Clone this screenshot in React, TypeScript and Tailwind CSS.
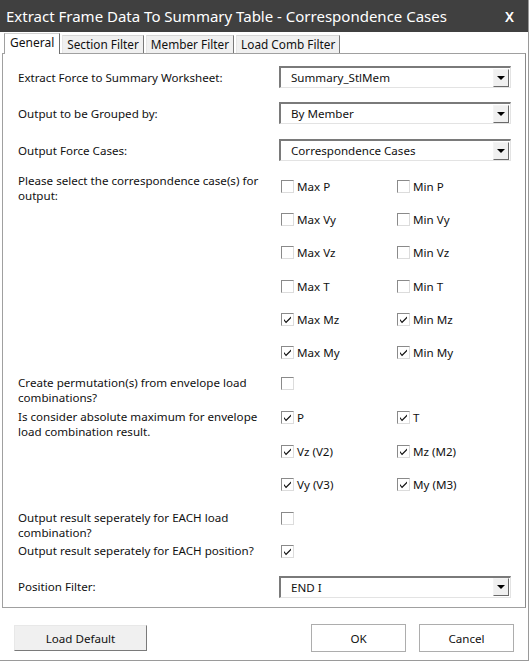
import React from "react";

const font = { fontFamily: '"Noto Sans", "Open Sans", sans-serif' };

const Check = ({ checked }: { checked?: boolean }) => (
  <span className="relative inline-flex h-[13px] w-[13px] shrink-0 border border-t-[#8a8a8a] border-l-[#8a8a8a] border-r-[#dcdcdc] border-b-[#dcdcdc] bg-white">
    {checked && (
      <svg viewBox="0 0 11 11" className="absolute left-[0px] top-[0px] h-[11px] w-[11px]">
        <path d="M2 5 L4 7.5 L9 2.5 L9 4.2 L4 9.2 L2 6.8 Z" fill="#111" />
      </svg>
    )}
  </span>
);

const CheckItem = ({ label, checked }: { label: string; checked?: boolean }) => (
  <div className="flex items-center gap-[3px]">
    <Check checked={checked} />
    <span>{label}</span>
  </div>
);

const Dropdown = ({ value }: { value: string }) => (
  <div className="flex h-[22px] w-[232px] items-center border-t-2 border-l-2 border-t-[#7a7a7a] border-l-[#7a7a7a] border-r border-b border-r-[#e3e3e3] border-b-[#e3e3e3] bg-white">
    <span className="flex-1 pl-[10px]">{value}</span>
    <div className="mr-[1px] flex h-[18px] w-[16px] items-center justify-center border border-t-[#f4f4f4] border-l-[#f4f4f4] border-r-[#6a6a6a] border-b-[#6a6a6a] bg-[#f0f0f0]">
      <svg viewBox="0 0 8 4" className="h-[4px] w-[8px]">
        <path d="M0 0 L8 0 L4 4 Z" fill="#000" />
      </svg>
    </div>
  </div>
);

const Tab = ({ label, active }: { label: string; active?: boolean }) =>
  active ? (
    <div className="relative z-10 -mb-[1px] flex h-[21px] items-start border border-b-0 border-l-[#a0a0a0] border-t-[#d0d0d0] border-r-[#6f6f6f] bg-white px-[5px] pt-[1px] text-[12px]">
      {label}
    </div>
  ) : (
    <div className="ml-[2px] flex h-[18px] items-center border border-b-0 border-l-[#e6e6e6] border-t-[#d6d6d6] border-r-[#7a7a7a] bg-[#f0f0f0] px-[4px] text-[11.8px]">
      {label}
    </div>
  );

export default function App() {
  return (
    <div
      className="relative h-[661px] w-[529px] overflow-hidden border-r border-b border-[#9a9a9a] bg-white text-[11.6px] leading-[15px] text-[#111]"
      style={font}
    >
      <div className="flex h-[32px] items-center justify-between bg-[#404040] pl-[6px] pr-[14px] text-[15px] text-white">
        <span>Extract Frame Data To Summary Table - Correspondence Cases</span>
        <span className="text-[14px] font-semibold">X</span>
      </div>

      <div className="flex h-[21px] items-end pl-[4px] pt-[1px]">
        <Tab label="General" active />
        <Tab label="Section Filter" />
        <Tab label="Member Filter" />
        <Tab label="Load Comb Filter" />
      </div>

      <div className="ml-[2px] flex h-[555px] w-[524px] flex-col border border-[#a0a0a0] border-r-[#8a8a8a] pl-[15px] pt-[12px]">
        <div className="flex h-[22px] items-center">
          <span className="w-[261px]">Extract Force to Summary Worksheet:</span>
          <Dropdown value="Summary_StlMem" />
        </div>
        <div className="mt-[14px] flex h-[22px] items-center">
          <span className="w-[261px]">Output to be Grouped by:</span>
          <Dropdown value="By Member" />
        </div>
        <div className="mt-[15px] flex h-[22px] items-center">
          <span className="w-[261px]">Output Force Cases:</span>
          <Dropdown value="Correspondence Cases" />
        </div>

        <div className="mt-[12px] flex">
          <span className="w-[263px]">
            Please select the correspondence case(s) for output:
          </span>
          <div className="grid w-[240px] grid-cols-[116px_1fr] auto-rows-[33.4px]">
            {[
              ["Max P", false, "Min P", false],
              ["Max Vy", false, "Min Vy", false],
              ["Max Vz", false, "Min Vz", false],
              ["Max T", false, "Min T", false],
              ["Max Mz", true, "Min Mz", true],
              ["Max My", true, "Min My", true],
            ].map(([a, ac, b, bc]) => (
              <React.Fragment key={a as string}>
                <div className="flex h-[26px] items-center">
                  <CheckItem label={a as string} checked={ac as boolean} />
                </div>
                <div className="flex h-[26px] items-center">
                  <CheckItem label={b as string} checked={bc as boolean} />
                </div>
              </React.Fragment>
            ))}
          </div>
        </div>

        <div className="mt-[2px] flex h-[30px]">
          <span className="w-[263px]">Create permutation(s) from envelope load combinations?</span>
          <div className="flex h-[17px] items-center">
            <Check />
          </div>
        </div>

        <div className="mt-[4px] flex">
          <span className="w-[263px]">Is consider absolute maximum for envelope load combination result.</span>
          <div className="grid w-[240px] grid-cols-[116px_1fr] auto-rows-[33.5px]">
            {[
              ["P", "T"],
              ["Vz (V2)", "Mz (M2)"],
              ["Vy (V3)", "My (M3)"],
            ].map(([a, b]) => (
              <React.Fragment key={a}>
                <div className="flex h-[17px] items-center">
                  <CheckItem label={a} checked />
                </div>
                <div className="flex h-[17px] items-center">
                  <CheckItem label={b} checked />
                </div>
              </React.Fragment>
            ))}
          </div>
        </div>

        <div className="flex h-[30px]">
          <span className="w-[263px]">Output result seperately for EACH load combination?</span>
          <div className="flex h-[17px] items-center">
            <Check />
          </div>
        </div>

        <div className="mt-[3px] flex h-[15px]">
          <span className="w-[263px]">Output result seperately for EACH position?</span>
          <div className="flex h-[17px] items-center">
            <Check checked />
          </div>
        </div>

        <div className="mt-[18px] flex h-[22px] items-center">
          <span className="w-[261px]">Position Filter:</span>
          <Dropdown value="END I" />
        </div>
      </div>

      <div className="mt-[16px] flex items-center pl-[14px] pr-[14px]">
        <button className="h-[26px] w-[133px] border border-t-[#e8e8e8] border-l-[#e8e8e8] border-r-[#7a7a7a] border-b-[#7a7a7a] bg-[#f0f0f0]">
          Load Default
        </button>
        <div className="flex-1" />
        <button className="h-[28px] w-[95px] border border-[#adadad] bg-white">OK</button>
        <button className="ml-[13px] h-[28px] w-[95px] border border-[#adadad] bg-white">Cancel</button>
      </div>
    </div>
  );
}
